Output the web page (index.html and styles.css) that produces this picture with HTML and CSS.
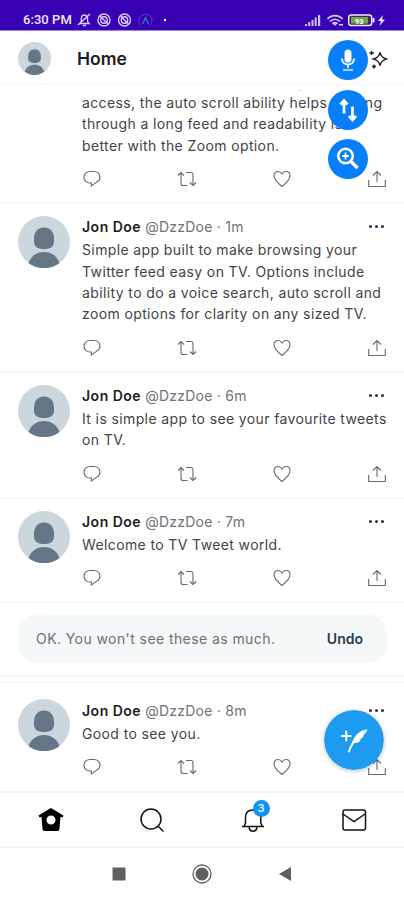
FILE: index.html
```html
<!DOCTYPE html>
<html lang="en">
<head>
<meta charset="utf-8">
<title>Home</title>
<link rel="stylesheet" href="styles.css">
</head>
<body>
<svg class="defs" aria-hidden="true">
  <symbol id="avatar" viewBox="0 0 52 52"><circle cx="26" cy="26" r="26" fill="#ccd6dd"/><path d="M26 11.500c6 0 10 4.500 10 11v3c0 5-3.500 7.500-10 7.500s-10-2.500-10-7.500v-3c0-6.500 4-11 10-11z" fill="#657786"/><path d="M10.500 47C13 40 18.500 36 26 36s13 4 15.500 11A26 26 0 0 1 10.500 47z" fill="#657786"/></symbol>
  <symbol id="reply" viewBox="0 0 20 20"><path d="M8 2.500h4c3.500 0 6 2.500 6 5.500 0 2.200-1.200 4-3.200 5.100L9.300 17v-3H8c-3.500 0-6-2.500-6-5.800 0-3.200 2.500-5.700 6-5.700z"/></symbol>
  <symbol id="retweet" viewBox="0 0 20 20"><path d="M1 6.500 4 3.500l3 3M4 4v10.500q0 2 2 2h4.500M9 3.500h5q2 0 2 2v11M13 13.500l3 3 3-3"/></symbol>
  <symbol id="heart" viewBox="0 0 20 20"><path d="M10 17.500C5.500 14 2 10.800 2 6.800 2 4.200 3.800 2.500 6 2.500c1.800 0 3.200 1 4 2.600.8-1.600 2.200-2.600 4-2.600 2.200 0 4 1.700 4 4.300 0 4-3.500 7.200-8 10.700z"/></symbol>
  <symbol id="share" viewBox="0 0 20 20"><path d="M10 13V2.500M6 6.500l4-4 4 4M1.700 11v6.500h16.600V11"/></symbol>
</svg>
<main class="phone">
  <div class="status">
    <span class="clock">6:30 PM</span>
    <svg class="status-left" viewBox="0 0 94 16" fill="none" stroke="#d8cbfa" stroke-width="1.400">
      <path d="M3 11.500h9l-1.500-2V6.500A3.500 3.500 0 0 0 7.500 3C5 3 4.300 5 4.300 7v2.500zM6 13.500h3M1 13 13 2"/>
      <circle cx="27" cy="8" r="6"/><circle cx="27" cy="8" r="3.200"/><path d="m23 4 8 8"/>
      <circle cx="47.500" cy="8" r="6"/><circle cx="47.500" cy="8" r="3.200"/><path d="m43.500 4 8 8"/>
      <g stroke="#5b45bb" stroke-width="1"><path d="M63 13c-2-3-1-9 3-10 4-2 9 1 9 5 0 3-1 5-3 5"/><path d="m65.500 12 3-6 3 6" stroke="#2b7ab8" stroke-width="1.500"/></g>
      <circle cx="88" cy="8" r="1.200" fill="#fff" stroke="none"/>
    </svg>
    <svg class="status-right" viewBox="0 0 82 16">
      <g fill="#cfc3f7"><path d="M0 12h2v2H0zM3.200 10h2v4h-2zM6.500 8h2v6h-2zM9.700 5.500h2V14h-2zM13 3h2.200v11H13z"/></g>
      <g fill="none" stroke="#d8cbfa" stroke-width="1.700"><path d="M22.500 7c4-4.500 11-4.500 15 0M25 9.500c3-3 7-3 10 0M27.500 11.800c1.500-1.300 3.500-1.300 5 0"/></g><path d="m30 14-2-2.500h4zM34 12h4v1.500h-4z" fill="#d8cbfa"/>
      <rect x="43.700" y="3" width="23" height="10.500" rx="2.500" fill="#38266f" stroke="#eee9ff" stroke-width="1.400"/><path d="M67.500 6h2v4.500h-2z" fill="#eee9ff"/><rect x="46" y="5" width="17" height="6.500" fill="#6fa83f"/>
      <text x="50" y="11.500" class="charge">93</text>
      <path d="m78 3-5 6h3l-1.500 5 5.500-6.500h-3z" fill="#eee9ff"/>
    </svg>
  </div>
  <header class="top">
    <svg class="me"><use href="#avatar"/></svg>
    <h1>Home</h1>
    <svg class="sparkle" viewBox="0 0 20 20" fill="none" stroke="#222" stroke-width="1.500"><path d="M12 3.500c.8 3.500 2 5 6.500 6.500-4.500 1.500-5.700 3-6.500 6.500C11.200 13 10 11.500 5.500 10 10 8.500 11.200 7 12 3.500zM3.500 2v4M1.500 4h4.500M6 15.500v4M4 17.500h4"/></svg>
  </header>

  <section class="feed">
    <article class="tweet first">
      <div class="body">
        <div class="tail">,</div>
        <p class="text">access, the auto scroll ability helps moving<br>through a long feed and readability is<br>better with the Zoom option.</p>
        <div class="actions"><svg><use href="#reply"/></svg><svg><use href="#retweet"/></svg><svg><use href="#heart"/></svg><svg><use href="#share"/></svg></div>
      </div>
    </article>
    <article class="tweet">
      <svg class="avatar"><use href="#avatar"/></svg>
      <div class="body">
        <div class="meta"><b>Jon Doe</b><span>@DzzDoe · 1m</span><i class="more"></i></div>
        <p class="text">Simple app built to make browsing your<br>Twitter feed easy on TV. Options include<br>ability to do a voice search, auto scroll and<br>zoom options for clarity on any sized TV.</p>
        <div class="actions"><svg><use href="#reply"/></svg><svg><use href="#retweet"/></svg><svg><use href="#heart"/></svg><svg><use href="#share"/></svg></div>
      </div>
    </article>
    <article class="tweet">
      <svg class="avatar"><use href="#avatar"/></svg>
      <div class="body">
        <div class="meta"><b>Jon Doe</b><span>@DzzDoe · 6m</span><i class="more"></i></div>
        <p class="text">It is simple app to see your favourite tweets<br>on TV.</p>
        <div class="actions"><svg><use href="#reply"/></svg><svg><use href="#retweet"/></svg><svg><use href="#heart"/></svg><svg><use href="#share"/></svg></div>
      </div>
    </article>
    <article class="tweet">
      <svg class="avatar"><use href="#avatar"/></svg>
      <div class="body">
        <div class="meta"><b>Jon Doe</b><span>@DzzDoe · 7m</span><i class="more"></i></div>
        <p class="text">Welcome to TV Tweet world.</p>
        <div class="actions"><svg><use href="#reply"/></svg><svg><use href="#retweet"/></svg><svg><use href="#heart"/></svg><svg><use href="#share"/></svg></div>
      </div>
    </article>
    <div class="notice-wrap"><div class="notice"><span>OK. You won't see these as much.</span><b>Undo</b></div></div>
    <div class="gap"></div>
    <article class="tweet last">
      <svg class="avatar"><use href="#avatar"/></svg>
      <div class="body">
        <div class="meta"><b>Jon Doe</b><span>@DzzDoe · 8m</span><i class="more"></i></div>
        <p class="text">Good to see you.</p>
        <div class="actions"><svg><use href="#reply"/></svg><svg><use href="#retweet"/></svg><svg><use href="#heart"/></svg><svg><use href="#share"/></svg></div>
      </div>
    </article>
  </section>

  <nav class="tabs">
    <svg viewBox="0 0 28 28"><path fill="#000" fill-rule="evenodd" d="M14 2 26.500 9.500l-1 2-2-.8L22.500 23q-.3 2-2 2h-13q-1.700 0-2-2L4.500 10.700l-2 .8-1-2zM14 9.500a4.500 4.500 0 1 0 0 9 4.500 4.500 0 0 0 0-9z"/></svg>
    <svg viewBox="0 0 28 28" fill="none" stroke="#111" stroke-width="1.500"><circle cx="13" cy="13" r="10"/><path d="m20.200 20.200 5.300 5.300"/></svg>
    <div class="bell"><svg viewBox="0 0 28 28" fill="none" stroke="#111" stroke-width="1.500"><path d="M3 20.500h22M5 20.500l1.500-3.500v-5.500C6.500 6.500 9.500 4 14 4s7.800 2.500 7.800 7.500V17l1.500 3.500M10 21.500c.5 2.500 2 3.700 4 3.700s3.500-1.200 4-3.700"/></svg><em>3</em></div>
    <svg viewBox="0 0 28 28" fill="none" stroke="#111" stroke-width="1.500"><rect x="3" y="4" width="22.500" height="20" rx="2"/><path d="m3 8 11 7.500L25 8"/></svg>
  </nav>
  <div class="system">
    <svg viewBox="0 0 14 14"><path d="M.5.500h13v13H.5z" fill="#606060"/></svg>
    <svg class="round" viewBox="0 0 20 20"><circle cx="10" cy="10" r="9" fill="none" stroke="#606060" stroke-width="1.300"/><circle cx="10" cy="10" r="6.500" fill="#606060"/></svg>
    <svg viewBox="0 0 14 14"><path d="M13 0v14L1 7z" fill="#606060"/></svg>
  </div>

  <div class="tools">
    <svg viewBox="0 0 40 40"><circle cx="20" cy="20" r="20"/><rect x="16.500" y="9.500" width="7" height="13" rx="3.500" fill="#fff"/><path d="M14 18.500c0 8 12 8 12 0M20 24.500V28" stroke="#fff" stroke-width="1.800" fill="none"/><path d="M15 29h10v2H15z" fill="#a8d0ff"/></svg>
    <svg viewBox="0 0 40 40"><circle cx="20" cy="20" r="20"/><path d="M16 23.500V11.500M12.500 14.500 16 10.500l3.500 4M24.500 16.500v12.500M21 26l3.500 4 3.500-4" stroke="#fff" stroke-width="2.700" fill="none"/></svg>
    <svg viewBox="0 0 40 40"><circle cx="20" cy="20" r="20"/><g stroke="#fff" fill="none"><circle cx="17.500" cy="17" r="7.300" stroke-width="2.500"/><path d="m22.500 22 7 7" stroke-width="3.300"/><path d="M17.500 13.500v7M14 17h7" stroke-width="1.800"/></g></svg>
  </div>
  <svg class="compose" viewBox="0 0 60 60"><circle cx="30" cy="30" r="30"/><path d="M17 26h10.500M22.200 20.700v10.600" stroke="#fff" stroke-width="2"/><path d="M43.500 19.500c-6 .5-10.500 3.500-13.500 9-2.300 4.300-4.800 9-6.200 13.500l1.500.8c1.600-4 3.100-7 4.900-9.800 3 .2 5.200-.8 6.800-3.200l-1.800-.3c2.300-.7 3.800-1.900 4.700-4l-1-.2c2-1.300 3.800-3.200 4.600-5.800z" fill="#fff"/></svg>
</main>
</body>
</html>
```

FILE: styles.css
```css
* { box-sizing: border-box; }
body { margin: 0; background: #fff; font-family: Inter, "Liberation Sans", sans-serif; color: #1c1c1f; }
svg { display: block; flex: none; }
.defs { position: absolute; width: 0; height: 0; }
.phone { position: relative; width: 404px; height: 900px; overflow: hidden; display: flex; flex-direction: column; }

.status { height: 31px; flex: none; background: #3700b3; border-bottom: 1px solid #9c85dc; display: flex; align-items: flex-start; padding: 12px 17px 0 23px; }
.clock { font: 500 13px/16px Roboto, sans-serif; color: #eee8ff; width: 54px; white-space: nowrap; letter-spacing: .05px; }
.status-left { width: 94px; height: 16px; }
.status-right { width: 82px; height: 16px; margin-left: auto; }
.charge { font: 700 7.500px Roboto, sans-serif; fill: #fff; }

.top { height: 54px; flex: none; display: flex; align-items: center; padding: 2px 16px 0 18px; border-bottom: 1px solid #f5f6f7; }
.me { width: 33px; height: 33px; }
.top h1 { margin: 0 0 0 26px; font-size: 17.500px; font-weight: 600; line-height: 24px; }
.sparkle { width: 20px; height: 20px; margin-left: auto; }

.feed { height: 706px; flex: none; overflow: hidden; }
.tweet { display: flex; padding: 12px 17px 13px 18px; border-bottom: 2px solid #f6f7f8; }
.avatar { width: 52px; height: 52px; margin-right: 12px; }
.body { flex: 1; min-width: 0; }
.meta { display: flex; align-items: center; height: 22px; font-size: 14px; white-space: nowrap; }
.meta b { font-weight: 600; margin-right: 4px; letter-spacing: .5px; }
.meta span { color: #6c737b; letter-spacing: .25px; }
.more { width: 3px; height: 3px; margin: 0 9px 0 auto; border-radius: 50%; background: #24324a; box-shadow: -6px 0 #24324a, 6px 0 #24324a; }
.text { margin: 1.500px 0 0; font-size: 14px; line-height: 21.300px; letter-spacing: .38px; white-space: nowrap; color: #424347; }
.actions { display: flex; justify-content: space-between; margin-top: 13px; }
.actions svg { width: 20px; height: 20px; fill: none; stroke: #626a72; stroke-width: 1.100; }
.first { padding: 0 17px 13px 82px; }
.first .text { margin-top: 0; }
.tail { height: 7px; margin-left: 217px; font-size: 5px; line-height: 6px; }

.notice-wrap { padding: 11px 17px 12px 18px; border-bottom: 2px solid #f6f7f8; }
.notice { height: 49px; border-radius: 20px; background: #f5f8f8; display: flex; justify-content: space-between; align-items: center; padding: 0 24px 0 18px; font-size: 14px; color: #68717a; }
.notice span { letter-spacing: .42px; }
.notice b { font-weight: 600; color: #263d51; }
.gap { height: 6px; border-bottom: 2px solid #f6f7f8; }
.last { border-bottom: 0; padding-top: 16px; }

.tabs { height: 57px; flex: none; border-top: 2px solid #f1f3f4; border-bottom: 2px solid #f1f3f4; display: grid; grid-template-columns: repeat(4, 101px); justify-items: center; align-items: center; }
.tabs svg { width: 28px; height: 28px; }
.bell { position: relative; }
.bell em { position: absolute; left: 14px; top: -6px; width: 17px; height: 17px; border-radius: 50%; background: #1592ee; color: #fff; font: 500 11px/17px Inter, sans-serif; text-align: center; }
.system { height: 52px; display: flex; justify-content: space-between; align-items: center; padding: 0 112px; }
.system svg { width: 14px; height: 14px; }
.system .round { width: 20px; height: 20px; }

.tools { position: absolute; left: 328px; top: 40px; display: grid; gap: 9.500px; }
.tools svg { width: 40px; height: 40px; fill: #087ffa; }
.compose { position: absolute; left: 324px; top: 709.500px; width: 60px; height: 60px; fill: #1d9bf0; border-radius: 50%; box-shadow: 0 1px 4px #0004; }
```
